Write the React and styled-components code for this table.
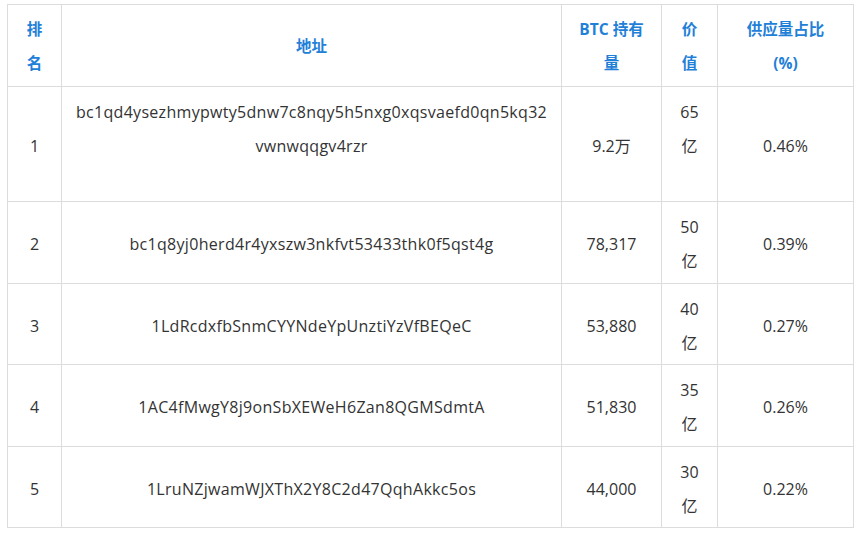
import React from "react";
import styled, { createGlobalStyle } from "styled-components";

const GlobalStyle = createGlobalStyle`
  body {
    margin: 0;
    background: #fff;
    font-family: "Segoe UI", "Open Sans", "Noto Sans CJK SC", sans-serif;
  }
`;

const rows = [
  {
    rank: 1,
    address: ["bc1qd4ysezhmypwty5dnw7c8nqy5h5nxg0xqsvaefd0qn5kq32", "vwnwqqgv4rzr", "\u00a0"],
    btc: "9.2万",
    value: ["65", "亿", "\u00a0"],
    share: "0.46%",
  },
  { rank: 2, address: ["bc1q8yj0herd4r4yxszw3nkfvt53433thk0f5qst4g"], btc: "78,317", value: ["50", "亿"], share: "0.39%" },
  { rank: 3, address: ["1LdRcdxfbSnmCYYNdeYpUnztiYzVfBEQeC"], btc: "53,880", value: ["40", "亿"], share: "0.27%" },
  { rank: 4, address: ["1AC4fMwgY8j9onSbXEWeH6Zan8QGMSdmtA"], btc: "51,830", value: ["35", "亿"], share: "0.26%" },
  { rank: 5, address: ["1LruNZjwamWJXThX2Y8C2d47QqhAkkc5os"], btc: "44,000", value: ["30", "亿"], share: "0.22%" },
];

const lines = (list) =>
  list.map((t, i) => (
    <React.Fragment key={i}>
      {i > 0 && <br />}
      {t}
    </React.Fragment>
  ));

function App() {
  return (
    <Page>
      <GlobalStyle />
      <Table>
        <colgroup>
          <col style={{ width: 54 }} />
          <col style={{ width: 500 }} />
          <col style={{ width: 100 }} />
          <col style={{ width: 56 }} />
          <col style={{ width: 136 }} />
        </colgroup>
        <thead>
          <tr>
            <Th>排<br />名</Th>
            <Th>地址</Th>
            <Th>BTC 持有<br />量</Th>
            <Th>价<br />值</Th>
            <Th>供应量占比<br />(%)</Th>
          </tr>
        </thead>
        <tbody>
          {rows.map((r) => (
            <tr key={r.rank}>
              <Td>{r.rank}</Td>
              <Td $wide>{lines(r.address)}</Td>
              <Td>{r.btc}</Td>
              <Td>{lines(r.value)}</Td>
              <Td>{r.share}</Td>
            </tr>
          ))}
        </tbody>
      </Table>
    </Page>
  );
}

export default App;

const Page = styled.div`
  padding: 4px 7px;
`;

const Table = styled.table`
  width: 846px;
  table-layout: fixed;
  border-collapse: collapse;
  font-size: 16px;
  color: #333;
`;

const Th = styled.th`
  border: 1px solid #dcdcdc;
  padding: 7.25px 4px 5.25px;
  line-height: 34px;
  text-align: center;
  font-size: 15.5px;
  font-weight: 700;
  color: #1f80d8;
`;

const Td = styled.td`
  border: 1px solid #dcdcdc;
  padding: 8.25px 4px 4.25px;
  line-height: 34px;
  text-align: center;
  vertical-align: middle;
  letter-spacing: ${(p) => (p.$wide ? "0.3px" : "0")};
`;
